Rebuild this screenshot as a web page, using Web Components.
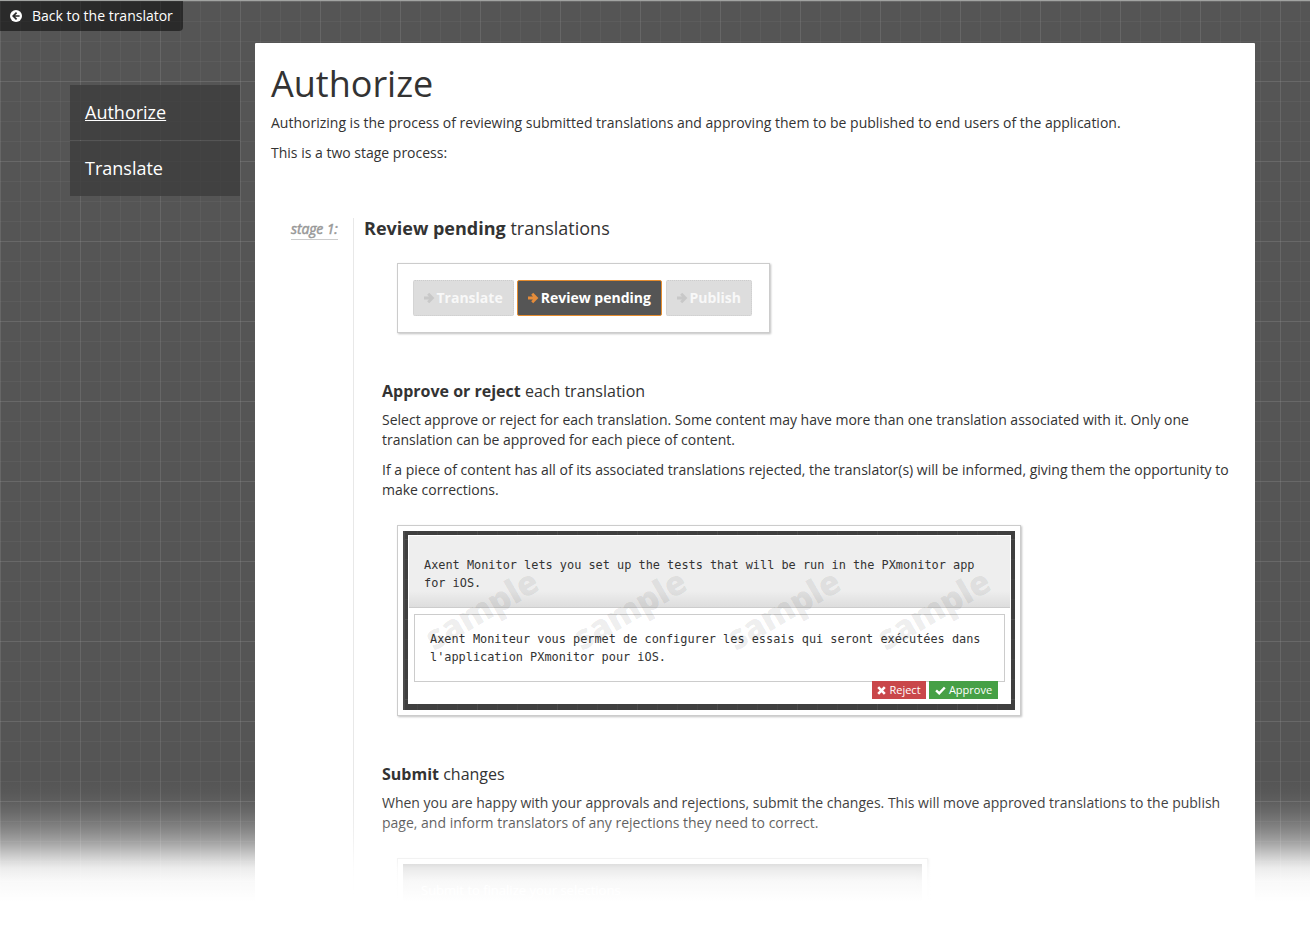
<!DOCTYPE html>
<html lang="en">
<head>
<meta charset="utf-8">
<title>Authorize</title>
<style>
html,body{margin:0;height:926px;overflow:hidden;background:#fff}
body{font-family:"Open Sans",sans-serif;font-size:14px;line-height:20px;color:#333}
</style>
</head>
<body>
<help-page>
  <back-link slot="top">Back to the translator</back-link>
  <side-nav slot="nav">
    <nav-item current>Authorize</nav-item>
    <nav-item>Translate</nav-item>
  </side-nav>
  <help-article></help-article>
</help-page>

<script>
const define = (name, html) => customElements.define(name, class extends HTMLElement {
  constructor() {
    super();
    const t = document.createElement('template');
    t.innerHTML = html;
    this.attachShadow({ mode: 'open' }).append(t.content.cloneNode(true));
  }
});

const grid = `
  background-color:#555;
  background-image:
    linear-gradient(rgba(255,255,255,.07) 1px,transparent 1px),
    linear-gradient(90deg,rgba(255,255,255,.06) 1px,transparent 1px),
    linear-gradient(rgba(255,255,255,.04) 1px,transparent 1px),
    linear-gradient(90deg,rgba(255,255,255,.04) 1px,transparent 1px);
  background-size:80px 80px,80px 80px,20px 20px,20px 20px;`;

define('help-page', `
<style>
:host{display:block;position:relative;width:1310px;height:926px;overflow:hidden}
.page{box-sizing:border-box;height:926px;border-top:1px solid #a2a4a2;${grid}}
.cols{display:flex;gap:15px;padding-left:70px;margin-top:12px}
.nav{width:170px;padding-top:42px}
.top{height:30px;display:flex}
.fade{position:absolute;left:0;right:0;top:780px;height:146px;pointer-events:none;
background:linear-gradient(rgba(255,255,255,0) 0,rgba(255,255,255,.02) 12px,rgba(255,255,255,.06) 22px,rgba(255,255,255,.12) 32px,rgba(255,255,255,.21) 42px,rgba(255,255,255,.32) 52px,rgba(255,255,255,.46) 62px,rgba(255,255,255,.65) 73px,rgba(255,255,255,.79) 81px,rgba(255,255,255,.89) 88px,rgba(255,255,255,.965) 101px,#fff 122px)}
</style>
<div class="page"><div class="top"><slot name="top"></slot></div>
<div class="cols"><div class="nav"><slot name="nav"></slot></div><slot></slot></div></div>
<div class="fade"></div>`);

define('back-link', `
<style>
:host{display:flex;align-items:center;box-sizing:border-box;width:183px;height:30px;padding-left:10px;gap:10px;background:rgba(0,0,0,.5);color:#fff;border-radius:0 0 4px 0;white-space:nowrap}
svg{display:block;flex:none}
</style>
<svg width="12" height="12" viewBox="0 0 12 12"><circle cx="6" cy="6" r="6" fill="#fff"/><path d="M6.6 2.6 3.2 6l3.4 3.4M3.6 6H9.6" fill="none" stroke="#2b2b2b" stroke-width="1.7"/></svg>
<span><slot></slot></span>`);

define('side-nav', `
<style>:host{display:flex;flex-direction:column;gap:1px}</style><slot></slot>`);

define('nav-item', `
<style>
:host{display:flex;align-items:center;box-sizing:border-box;height:55px;padding:0 0 2px 15px;background:rgba(62,62,62,.85);color:#fff;font-size:18px}
:host([current]){text-decoration:underline}
</style><span><slot></slot></span>`);

define('sample-frame', `
<style>
:host{display:block;box-sizing:border-box;border:1px solid #ccc;box-shadow:1px 1px 2px rgba(0,0,0,.25);background:#fff;margin-left:15px}
</style><slot></slot>`);

define('step-button', `
<style>
:host{display:flex;align-items:center;box-sizing:border-box;height:36px;padding:0 10px 0 9px;gap:1.5px;border:1px dotted #ccc;border-radius:2px;background:#ddd;color:#f8f8f8;font-weight:700;--arrow:#c8c8c8;white-space:nowrap}
:host([active]){background:#555;border:1px solid #e58c2e;color:#fff;--arrow:#e58c3a;margin:0 1px 0 .5px}
svg{flex:none}
</style>
<svg width="12" height="12" viewBox="0 0 12 12"><path d="M1 6H9M5.2 1.8 9.4 6 5.2 10.2" fill="none" stroke="var(--arrow)" stroke-width="2.8"/></svg>
<span><slot></slot></span>`);

define('verdict-button', `
<style>
:host{display:flex;align-items:center;justify-content:center;gap:3px;height:18px;box-sizing:border-box;font-size:11px;line-height:18px;color:#fff;background:#c9474a;width:54px}
:host([ok]){background:#46a046;width:69px}
.yes,:host([ok]) .no{display:none}:host([ok]) .yes{display:block}
</style>
<svg class="no" width="9" height="9" viewBox="0 0 9 9"><path d="M1.2 1.2 7.8 7.8M7.8 1.2 1.2 7.8" stroke="#fff" stroke-width="2.6"/></svg>
<svg class="yes" width="11" height="9" viewBox="0 0 11 9"><path d="M1.1 4.4 4.2 7.3 9.8 1.5" fill="none" stroke="#fff" stroke-width="2.5"/></svg>
<span><slot></slot></span>`);

define('translation-sample', `
<style>
:host{display:block;position:relative;box-sizing:border-box;margin:5px;width:612px;height:179px;padding:4px 4px 6px 3px;border-left:2px solid #4c4c4c;${grid}background-position:72px 8px;box-shadow:inset 0 0 0 9px rgba(0,0,0,.25);font:11.88px/18px "DejaVu Sans Mono",monospace;color:#333}
.in{background:#fff;height:169px;box-sizing:border-box;padding:1px;display:flex;flex-direction:column}
.src,.dst{white-space:pre}
.src{height:72px;box-sizing:border-box;border-bottom:1px solid #ccc;padding:20px 0 0 15px;background:linear-gradient(#eee 55px,#ddd)}
.dst{height:68px;box-sizing:border-box;margin:6px 5px 0;border:1px solid #ccc;padding:15px 0 0 15px}
.act{display:flex;justify-content:flex-end;gap:3px;padding-right:12px;margin-top:-1px;font-family:"Open Sans",sans-serif}
.mark{position:absolute;font:800 34px/32px "Open Sans",sans-serif;letter-spacing:-.4px;color:rgba(0,0,0,.08);-webkit-text-stroke:.6px rgba(0,0,0,.03);transform:translate(-50%,-50%) rotate(-30deg);top:78px}
</style>
<div class="in">
<div class="src">Axent Monitor lets you set up the tests that will be run in the PXmonitor app
for iOS.</div>
<div class="dst">Axent Moniteur vous permet de configurer les essais qui seront exécutées dans
l'application PXmonitor pour iOS.</div>
<div class="act"><verdict-button>Reject</verdict-button><verdict-button ok>Approve</verdict-button></div>
</div>
<span class="mark" style="left:76px">sample</span><span class="mark" style="left:224px">sample</span><span class="mark" style="left:378px">sample</span><span class="mark" style="left:528px">sample</span>`);

define('help-article', `
<style>
:host{display:block;box-sizing:border-box;width:1000px;height:900px;background:#fff;padding:21px 16px 0;border-radius:1px}
h1,h2,h3,p{margin:0;font-weight:400}
b{font-weight:700}
h1{font-size:36px;line-height:40px;margin-bottom:9px}
p{margin-bottom:10px}
.stage{display:flex;margin-top:55px}
.label{width:82px;box-sizing:border-box;padding:1px 0 0 20px}
.label span{display:inline-block;font-style:italic;letter-spacing:-.12px;color:#999;-webkit-text-stroke:.5px #999;border-bottom:1px solid #ccc;line-height:20px}
.body{flex:1;border-left:1px solid #e8e8e8;height:680px;padding-left:10px}
h2{font-size:18px;line-height:20px}
.sub{padding-left:18px}
h3{font-size:16px;line-height:20px;margin-bottom:9px}
.steps{width:373px;height:70px;margin-top:25px;margin-bottom:48px}
.row{display:flex;gap:3px;padding:16px 15px}
.tr{width:624px;height:191px;margin-top:25px;margin-bottom:48px}
.fin{width:531px;height:90px;margin-top:25px}
.panel{margin:5px;height:80px;background:#444;border:6px solid #3c3c3c;box-sizing:border-box;color:#fff;padding:10px 12px;font-size:13px;font-weight:500}
</style>
<h1>Authorize</h1>
<p>Authorizing is the process of reviewing submitted translations and approving them to be published to end users of the application.</p>
<p>This is a two stage process:</p>
<div class="stage">
<div class="label"><span>stage 1:</span></div>
<div class="body">
<h2><b>Review pending</b> translations</h2>
<div class="sub">
<sample-frame class="steps"><div class="row"><step-button>Translate</step-button><step-button active>Review pending</step-button><step-button>Publish</step-button></div></sample-frame>
<h3><b>Approve or reject</b> each translation</h3>
<p>Select approve or reject for each translation. Some content may have more than one translation associated with it. Only one translation can be approved for each piece of content.</p>
<p>If a piece of content has all of its associated translations rejected, the translator(s) will be informed, giving them the opportunity to make corrections.</p>
<sample-frame class="tr"><translation-sample></translation-sample></sample-frame>
<h3><b>Submit</b> changes</h3>
<p>When you are happy with your approvals and rejections, submit the changes. This will move approved translations to the publish page, and inform translators of any rejections they need to correct.</p>
<sample-frame class="fin"><div class="panel">Submit to finalize your selections</div></sample-frame>
</div></div></div>`);
</script>
</body>
</html>
